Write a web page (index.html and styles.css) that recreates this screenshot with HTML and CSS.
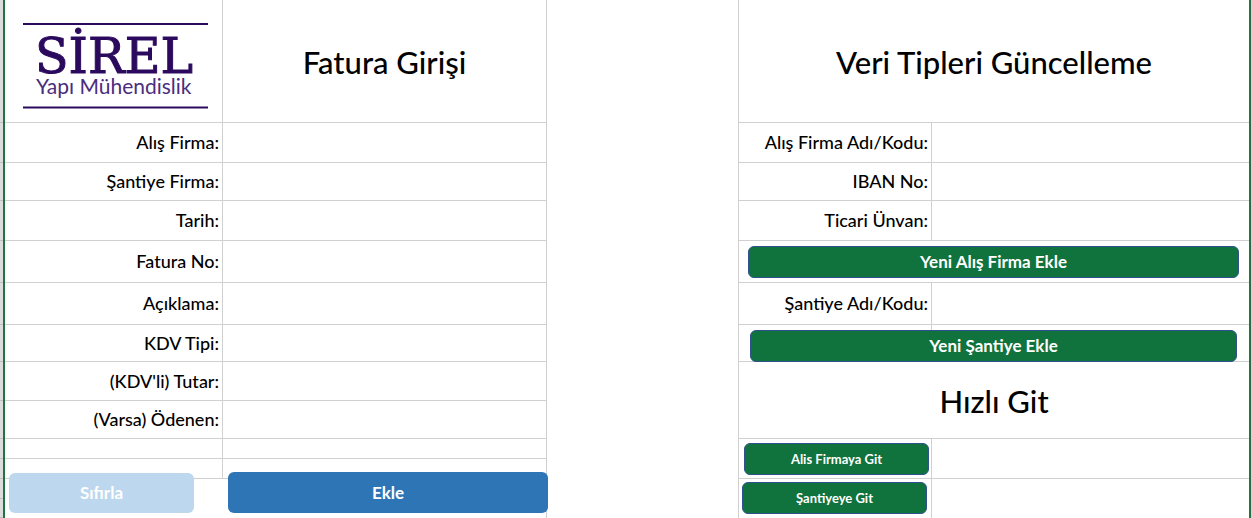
FILE: index.html
```html
<!DOCTYPE html>
<html lang="tr">
<head>
<meta charset="utf-8">
<meta name="viewport" content="width=device-width, initial-scale=1">
<title>Fatura Girişi</title>
<link rel="stylesheet" href="styles.css">
</head>
<body>
<main class="sheet">
  <div class="row-heads">
    <i></i><i></i><i></i><i></i><i></i><i></i><i></i><i></i><i></i><i></i><i></i><i></i><i></i>
  </div>

  <form class="panel invoice">
    <div class="row">
      <div class="cell logo-cell">
        <svg class="logo" width="186" height="88" viewBox="0 0 186 88" role="img" aria-label="SİREL Yapı Mühendislik">
          <path d="M0 2H185M0 85.500H185" class="logo-rule"/>
          <text x="12" y="51" class="logo-name">SİREL</text>
          <text x="13" y="72" class="logo-sub">Yapı Mühendislik</text>
        </svg>
      </div>
      <h1 class="cell title">Fatura Girişi</h1>
    </div>
    <div class="row"><label class="cell" for="alis">Alış Firma:</label><input class="cell" id="alis" type="text"></div>
    <div class="row"><label class="cell" for="santiye">Şantiye Firma:</label><input class="cell" id="santiye" type="text"></div>
    <div class="row"><label class="cell" for="tarih">Tarih:</label><input class="cell" id="tarih" type="text"></div>
    <div class="row"><label class="cell" for="fatura">Fatura No:</label><input class="cell" id="fatura" type="text"></div>
    <div class="row"><label class="cell" for="aciklama">Açıklama:</label><input class="cell" id="aciklama" type="text"></div>
    <div class="row"><label class="cell" for="kdv">KDV Tipi:</label><input class="cell" id="kdv" type="text"></div>
    <div class="row"><label class="cell" for="tutar">(KDV'li) Tutar:</label><input class="cell" id="tutar" type="text"></div>
    <div class="row"><label class="cell" for="odenen">(Varsa) Ödenen:</label><input class="cell" id="odenen" type="text"></div>
    <div class="row"><div class="cell"></div><div class="cell"></div></div>
    <div class="row"><div class="cell"></div><div class="cell"></div></div>
    <div class="actions">
      <button class="btn reset" type="reset">Sıfırla</button>
      <button class="btn add" type="button">Ekle</button>
    </div>
  </form>

  <form class="panel types">
    <div class="row merged"><h2 class="cell title">Veri Tipleri Güncelleme</h2></div>
    <div class="row"><label class="cell" for="firma-kod">Alış Firma Adı/Kodu:</label><input class="cell" id="firma-kod" type="text"></div>
    <div class="row"><label class="cell" for="iban">IBAN No:</label><input class="cell" id="iban" type="text"></div>
    <div class="row"><label class="cell" for="unvan">Ticari Ünvan:</label><input class="cell" id="unvan" type="text"></div>
    <div class="row merged"><div class="cell"><button class="btn green wide" type="button">Yeni Alış Firma Ekle</button></div></div>
    <div class="row"><label class="cell" for="santiye-kod">Şantiye Adı/Kodu:</label><input class="cell" id="santiye-kod" type="text"></div>
    <div class="row"><div class="cell"></div><button class="btn green wide over" type="button">Yeni Şantiye Ekle</button></div>
    <div class="row merged"><h2 class="cell title">Hızlı Git</h2></div>
    <div class="row"><div class="cell"><button class="btn green go" type="button">Alis Firmaya Git</button></div><div class="cell"></div></div>
    <div class="row"><div class="cell"><button class="btn green go last" type="button">Şantiyeye Git</button></div><div class="cell"></div></div>
  </form>
</main>
</body>
</html>
```
FILE: styles.css
```css
* { box-sizing: border-box; }

body {
  margin: 0;
  background: #fff;
  color: #000;
  font-family: Lato, "Open Sans", sans-serif;
  font-size: 18px;
  font-weight: 500;
  line-height: 20px;
}

.sheet {
  display: grid;
  grid-template-columns: 5px 542fr 191fr 511fr;
  min-height: 100vh;
  overflow: hidden;
  border-right: 2px solid #217346;
}

.row-heads,
.panel {
  display: grid;
  align-content: start;
}

.row-heads {
  grid-template-rows: 123px 40px 38px 40px 42px 42px 37px 39px 38px 20px 20px 20px 19px;
  background: #dcdcdc;
  border-right: 2px solid #217346;
}

.row-heads i { border-bottom: 1px solid #bfbfbf; }

.invoice {
  grid-column: 2;
  grid-template-rows: 123px 40px 38px 40px 42px 42px 37px 39px 38px 20px 20px 39px;
  border-right: 1px solid #d0d0d0;
}

.types {
  grid-column: 4;
  grid-template-rows: 123px 40px 38px 40px 42px 42px 37px 77px 40px 39px;
  border-left: 1px solid #d0d0d0;
}

.row {
  display: grid;
  grid-template-columns: 218fr 323fr;
  border-bottom: 1px solid #d0d0d0;
}

.types .row { grid-template-columns: 193fr 317fr; }
.types .row.merged { grid-template-columns: 1fr; }
.types .row:last-child { border-bottom: 0; }

.cell {
  min-width: 0;
  margin: 0;
  grid-row: 1;
}

.row:not(.merged) > .cell:first-child {
  grid-column: 1;
  border-right: 1px solid #d0d0d0;
}

label.cell {
  display: flex;
  align-items: center;
  justify-content: flex-end;
  padding: 0 3px 1px 0;
}

input.cell {
  width: 100%;
  padding: 0 4px;
  border: 0;
  background: transparent;
  font: inherit;
}

input.cell:focus { outline: 2px solid #217346; outline-offset: -2px; }

.title {
  display: flex;
  align-items: center;
  justify-content: center;
  padding-top: 2px;
  font-size: 31px;
  font-weight: 500;
  line-height: 36px;
}

.logo-cell { padding: 22px 0 0 18px; }
.logo { display: block; overflow: visible; }
.logo-rule { stroke: #2b0a5e; stroke-width: 2; }

.logo-name {
  font-family: "DejaVu Serif", serif;
  font-size: 49px;
  font-weight: 400;
  fill: #2b0a5e;
  stroke: #2b0a5e;
  stroke-width: 1;
}

.logo-sub {
  font-family: Lato, sans-serif;
  font-size: 21px;
  font-weight: 400;
  fill: #4b2d7f;
}

.btn {
  border: 0;
  border-radius: 6px;
  padding: 0;
  color: #fff;
  font: inherit;
  font-size: 17px;
  font-weight: 700;
}

.actions {
  display: grid;
  grid-template-columns: 185fr 320fr;
  gap: 34px;
  height: 41px;
  margin: -7px -2px 0 4px;
}

.reset { margin-top: 1px; background: #bdd7ee; }
.add { background: #2e75b6; }

.green {
  display: block;
  height: 32px;
  background: #10723c;
  border: 1px solid #2f528f;
}

.wide { width: calc(100% - 19px); margin: 5px 9px 0; }

.over {
  grid-row: 1;
  grid-column: 1 / -1;
  width: auto;
  margin: 5px 12px -1px 11px;
}

.go {
  width: calc(100% - 7px);
  margin: 4px 2px 0 5px;
  font-size: 13px;
}

.last { margin: 3px 4px 0 3px; }
```
